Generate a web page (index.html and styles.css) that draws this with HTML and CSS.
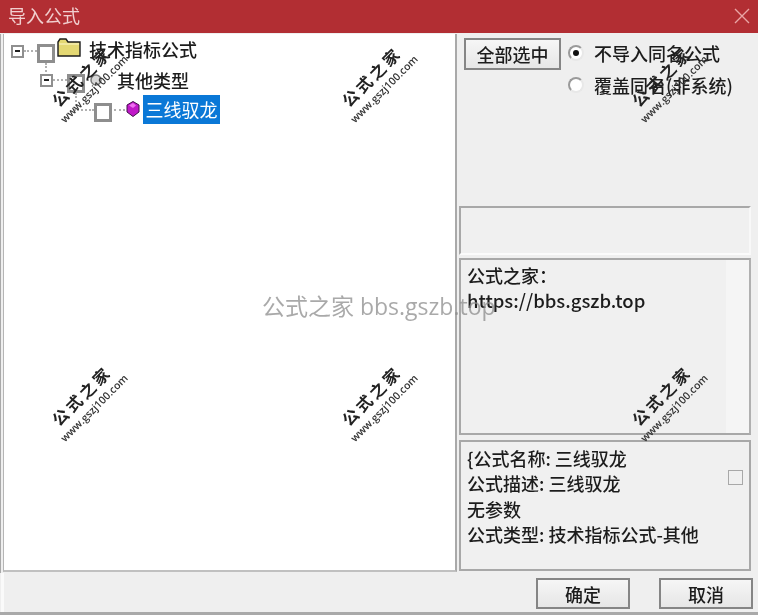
FILE: index.html
```html
<!DOCTYPE html>
<html lang="zh">
<head>
<meta charset="utf-8">
<title>导入公式</title>
<link rel="stylesheet" href="styles.css">
</head>
<body>
<div class="dialog">
  <header class="titlebar">
    <span class="title">导入公式</span>
    <svg class="close" width="16" height="16" viewBox="0 0 16 16"><path d="M1 1 L15 15 M15 1 L1 15" stroke="#e9a5a5" stroke-width="1.4" fill="none"/></svg>
  </header>
  <main class="main">
    <section class="tree">
      <div class="row row1">
        <span class="exp"></span><span class="hdots d1"></span>
        <span class="chk chk1"></span>
        <svg class="folder" width="24" height="19" viewBox="0 0 24 19"><path d="M1 18 V4 L3 1 H9 L11 4 H23 V18 Z" fill="#e4d873" stroke="#1c1c1c" stroke-width="1.4"/><path d="M2 6 H22" stroke="#f6efb4" stroke-width="1.4"/></svg>
        <span class="label l1">技术指标公式</span>
      </div>
      <div class="row row2">
        <span class="exp"></span><span class="hdots d2"></span>
        <span class="chk chk2"></span>
        <svg class="small" width="16" height="14" viewBox="0 0 16 14"><circle cx="8" cy="7" r="5" fill="#d8d8d8" stroke="#777" stroke-width="1.5"/></svg>
        <span class="label l2">其他类型</span>
      </div>
      <div class="row row3">
        <span class="hdots d3"></span>
        <span class="chk chk3"></span>
        <span class="hdots d4"></span>
        <svg class="gem" width="14" height="16" viewBox="0 0 14 16"><path d="M7 0.5 L13 4 V11 L7 15.5 L1 11 V4 Z" fill="#c018c8" stroke="#40104a" stroke-width="1"/><path d="M3 4.5 L7 2 L10 4.5 L7 7 Z" fill="#ee70f0"/></svg>
        <span class="selected">三线驭龙</span>
      </div>
    </section>
    <aside class="side">
      <div class="options">
        <button class="btn btn-all">全部选中</button>
        <div class="radios">
          <div class="radio-row"><span class="radio on"></span><span>不导入同名公式</span></div>
          <div class="radio-row"><span class="radio"></span><span>覆盖同名(非系统)</span></div>
        </div>
      </div>
      <div class="box box-empty"></div>
      <div class="box box-link">
        <p>公式之家：</p>
        <p class="url">https://bbs.gszb.top</p>
      </div>
      <div class="box box-info">
        <div class="info-text">
          <p>{公式名称: 三线驭龙</p>
          <p>公式描述: 三线驭龙</p>
          <p>无参数</p>
          <p>公式类型: 技术指标公式-其他</p>
        </div>
        <span class="tiny-chk"></span>
      </div>
    </aside>
  </main>
  <footer class="footer">
    <button class="btn btn-foot">确定</button>
    <button class="btn btn-foot">取消</button>
  </footer>
  <div class="wm w1"><b>公式之家</b><i>www.gszj100.com</i></div>
  <div class="wm w2"><b>公式之家</b><i>www.gszj100.com</i></div>
  <div class="wm w3"><b>公式之家</b><i>www.gszj100.com</i></div>
  <div class="wm w4"><b>公式之家</b><i>www.gszj100.com</i></div>
  <div class="wm w5"><b>公式之家</b><i>www.gszj100.com</i></div>
  <div class="wm w6"><b>公式之家</b><i>www.gszj100.com</i></div>
  <div class="center-mark">公式之家 bbs.gszb.top</div>
</div>
</body>
</html>
```
FILE: styles.css
```css
* { box-sizing: border-box; }
html, body { margin: 0; padding: 0; }
body {
  width: 758px; height: 615px; overflow: hidden;
  font-family: "Noto Sans CJK SC", "Open Sans", sans-serif;
  color: #222;
}
.dialog {
  position: relative;
  width: 758px; height: 615px;
  display: flex; flex-direction: column;
  background: #efefef;
  border-bottom: 3px solid #a9a9a9;
  filter: blur(0.35px);
}
.titlebar {
  height: 33px; flex: none;
  background: #b22e33;
  display: flex; align-items: center; justify-content: space-between;
  padding: 0 8px;
}
.title { color: #f1cfcf; font-size: 18px; line-height: 33px; margin-top: -2px; }
.close { margin-right: 0; margin-top: -2px; }
.main {
  height: 539px; flex: none;
  display: flex;
  padding-left: 2px;
  border-left: 1px solid #a9a9a9;
  margin-top: 1px;
}
.tree {
  width: 454px; height: 538px;
  background: #fff;
  border-left: 1px solid #b5b5b5;
  border-right: 2px solid #a9a9a9;
  border-bottom: 2px solid #c0c0c0;
  padding-top: 4px;
  font-size: 18px;
}
.row { display: flex; align-items: center; position: relative; }
.row1 { height: 26px; padding-left: 7px; }
.row2 { height: 30px; padding-left: 36px; margin-top: 1px; }
.row3 { height: 30px; padding-left: 70px; }
.exp {
  position: relative;
  width: 13px; height: 13px; flex: none;
  border: 2px solid #8f8f8f; background: #fff;
}
.exp::after {
  content: ""; position: absolute; left: 2px; top: 3.5px;
  width: 5px; height: 2px; background: #222;
}
.hdots { flex: none; height: 0; border-top: 2px dotted #b0b0b0; }
.d1 { width: 13px; }
.d2 { width: 14px; }
.d3 { width: 20px; }
.d4 { width: 11px; margin: 0 1px 0 2px; }
.chk {
  position: relative;
  width: 18px; height: 19px; flex: none;
  border: 3px solid #8e8e8e; background: #fff;
}
.chk1 { margin-top: 5px; }
.chk2 { margin-top: 7px; }
.chk3 { margin-top: 4px; }
.chk1::after, .chk2::after {
  content: ""; position: absolute; left: 5px; top: 16px;
  height: 13px; border-left: 2px dotted #b0b0b0;
}
.folder { flex: none; margin: -7px 0 0 2px; }
.small { flex: none; margin: 0 0 0 3px; }
.gem { flex: none; margin-top: -2px; }
.label { color: #1c1c1c; font-weight: 500; line-height: 26px; white-space: nowrap; }
.l1 { margin: -4px 0 0 8px; }
.l2 { margin: -1px 0 0 13px; }
.selected {
  margin: -1px 0 0 3px;
  width: 77px; height: 29px;
  background: #0a78d7; color: #fff;
  font-size: 18px; line-height: 29px; text-align: center;
}
.side { flex: 1; display: flex; flex-direction: column; padding: 0 6px 0 2px; }
.options { height: 172px; display: flex; padding: 4px 0 0 5px; flex: none; }
.btn {
  font-family: inherit; font-size: 18px; font-weight: 500; color: #1c1c1c;
  background: linear-gradient(#f6f6f6, #e6e6e6);
  border: 2px solid #858585;
  padding: 0; margin: 0;
}
.btn-all { width: 97px; height: 32px; line-height: 26px; }
.radios { margin-left: 7px; display: flex; flex-direction: column; font-size: 18px; font-weight: 500; color: #1c1c1c; margin-top: -1px; }
.radio-row { display: flex; align-items: center; height: 32px; white-space: nowrap; }
.radio-row span:last-child { margin-left: 10px; }
.radio {
  position: relative;
  width: 16px; height: 16px; flex: none;
  border-radius: 50%;
  background: #fff;
  border: 2px solid #9a9a9a;
  border-right-color: #e8e8e8; border-bottom-color: #e8e8e8;
}
.radio.on::after {
  content: ""; position: absolute; left: 3px; top: 3px;
  width: 6px; height: 6px; border-radius: 50%; background: #111;
}
.box {
  flex: none; width: 292px; margin-left: 0;
  background: #f0f0f0;
  border: 2px solid #a8a8a8;
  border-right-color: #f8f8f8; border-bottom-color: #fbfbfb;
  font-weight: 500; color: #1c1c1c;
}
.box-empty { height: 49px; margin-bottom: 3px; }
.box-link { height: 177px; margin-bottom: 5px; padding: 3px 0 0 6px; font-size: 18px; line-height: 25px; border-right-color: #b0b0b0; border-bottom-color: #a8a8a8; background: linear-gradient(90deg, #f0f0f0 92%, #f5f5f5 92%); }
.url { font-size: 18.5px; }
.box-info { height: 131px; padding: 4px 6px 0 6px; font-size: 18px; line-height: 25.3px; display: flex; justify-content: space-between; border-right-color: #a8a8a8; border-bottom-color: #a8a8a8; }
.box p { margin: 0; white-space: nowrap; }
.tiny-chk { width: 15px; height: 15px; border: 1.5px solid #a8a8a8; margin-top: 24px; flex: none; }
.footer {
  flex: 1; display: flex; justify-content: flex-end; align-items: flex-start;
  gap: 29px; padding: 5px 5px 0 0;
  border-left: 3px solid #fafafa; margin-left: 1px;
}
.btn-foot { width: 94px; height: 31px; line-height: 26px; }
.wm {
  position: absolute;
  width: 100px; height: 42px;
  display: flex; flex-direction: column; align-items: center;
  transform: rotate(-45deg);
  pointer-events: none;
}
.wm b { font-size: 16px; line-height: 21px; font-weight: 700; letter-spacing: 3px; color: #222; }
.wm i { font: 600 10.5px/14px "Open Sans", sans-serif; color: #333; white-space: nowrap; }
.w1 { left: 39px; top: 63px; }
.w2 { left: 329px; top: 63px; }
.w3 { left: 619px; top: 63px; }
.w4 { left: 39px; top: 382px; }
.w5 { left: 329px; top: 382px; }
.w6 { left: 619px; top: 382px; }
.center-mark {
  position: absolute; left: 262px; top: 290px;
  font-family: "Open Sans", "Noto Sans CJK SC", sans-serif;
  font-size: 23px; line-height: 32px; white-space: nowrap;
  color: rgba(140,140,140,.75);
}
```
